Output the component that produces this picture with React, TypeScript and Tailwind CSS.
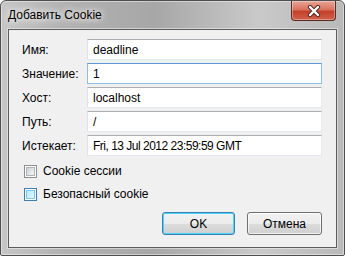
import React from 'react';

const font = { fontFamily: '"Liberation Sans", Arial, sans-serif' };

const fields = [
  { label: 'Имя:', value: 'deadline' },
  { label: 'Значение:', value: '1', focused: true },
  { label: 'Хост:', value: 'localhost' },
  { label: 'Путь:', value: '/' },
  { label: 'Истекает:', value: 'Fri, 13 Jul 2012 23:59:59 GMT', tight: true },
];

const CloseButton: React.FC = () => (
  <div className="absolute right-[8px] top-0 flex h-[20px] w-[45px] items-center justify-center rounded-b-[4px] border border-t-0 border-[#5b2a22] bg-[linear-gradient(to_bottom,#e8a596_0%,#d9735f_45%,#c4412a_55%,#d0604a_100%)] shadow-[inset_0_0_0_1px_rgba(255,255,255,0.35)]">
    <svg width="14" height="12" viewBox="0 0 14 12">
      <path d="M3 2 L11 10 M11 2 L3 10" stroke="#4a2a25" strokeWidth="4.2" strokeLinecap="round" />
      <path d="M3 2 L11 10 M11 2 L3 10" stroke="#ffffff" strokeWidth="2.4" strokeLinecap="round" />
    </svg>
  </div>
);

const Checkbox: React.FC<{ label: string; hover?: boolean }> = ({ label, hover }) => (
  <div className="flex h-[16px] items-center gap-[6px]">
    <div
      className={
        hover
          ? 'flex h-[13px] w-[13px] items-center justify-center border border-[#3c7fb1] bg-white'
          : 'flex h-[13px] w-[13px] items-center justify-center border border-[#8f8f8f] bg-white'
      }
    >
      <div
        className={
          hover
            ? 'h-[9px] w-[9px] border border-[#79c6f9] bg-[linear-gradient(135deg,#b9e9fc,#e0f6fe)]'
            : 'h-[9px] w-[9px] border border-[#aeb3b9] bg-[linear-gradient(135deg,#cbcfd5,#f6f6f6)]'
        }
      />
    </div>
    <span className="text-[12px] text-black">{label}</span>
  </div>
);

export default function App() {
  return (
    <div style={font} className="h-[256px] w-[345px] select-none bg-white">
      <div className="relative flex h-[256px] w-[345px] flex-col rounded-t-[6px] rounded-b-[2px] border border-[#4e4e4e] bg-[linear-gradient(to_right,#c6c6c6_0%,#b2b2b2_18%,#a7a7a7_45%,#c9c9c9_75%,#b9b9b9_100%)] shadow-[inset_0_0_0_1px_rgba(255,255,255,0.45)]">
        <div className="flex h-[28px] items-center pl-[7px]">
          <span className="text-[12px] text-black [text-shadow:0_0_6px_#fff,0_0_10px_#fff]">Добавить Cookie</span>
        </div>
        <CloseButton />
        <div className="mx-[7px] mb-[7px] flex flex-1 flex-col border border-[#5c5c5c] bg-[#f0f0f0] pl-[13px] pr-[14px] pt-[9px] shadow-[0_0_0_1px_rgba(255,255,255,0.45)]">
          <div className="grid grid-cols-[65px_1fr] gap-y-[3px]">
            {fields.map((f) => (
              <React.Fragment key={f.label}>
                <div className="flex h-[21px] items-center text-[12px] text-black">{f.label}</div>
                <div
                  className={
                    f.focused
                      ? 'flex h-[21px] items-center border border-[#8cbdee] border-t-[#5a9ad6] bg-white pl-[5px] text-[12px] text-black'
                      : 'flex h-[21px] items-center border border-[#e3e9ef] border-t-[#abadb3] border-l-[#e2e3ea] bg-white pl-[5px] text-[12px] text-black'
                  }
                >
                  <span className={f.tight ? 'tracking-[-0.5px]' : ''}>{f.value}</span>
                </div>
              </React.Fragment>
            ))}
          </div>
          <div className="ml-[2px] mt-[7px] flex flex-col gap-[7px]">
            <Checkbox label="Cookie сессии" />
            <Checkbox label="Безопасный cookie" hover />
          </div>
          <div className="mt-[10px] flex justify-end gap-[12px]">
            <div className="flex h-[23px] w-[73px] items-center justify-center rounded-[3px] border border-[#3c7fb1] bg-[linear-gradient(to_bottom,#f2f2f2_0%,#ebebeb_50%,#dddddd_51%,#cfcfcf_100%)] text-[12px] text-black shadow-[inset_0_0_0_1px_#48d4fb]">
              OK
            </div>
            <div className="flex h-[23px] w-[75px] items-center justify-center rounded-[3px] border border-[#707070] bg-[linear-gradient(to_bottom,#f2f2f2_0%,#ebebeb_50%,#dddddd_51%,#cfcfcf_100%)] text-[12px] text-black shadow-[inset_0_0_0_1px_rgba(255,255,255,0.7)]">
              Отмена
            </div>
          </div>
        </div>
      </div>
    </div>
  );
}
